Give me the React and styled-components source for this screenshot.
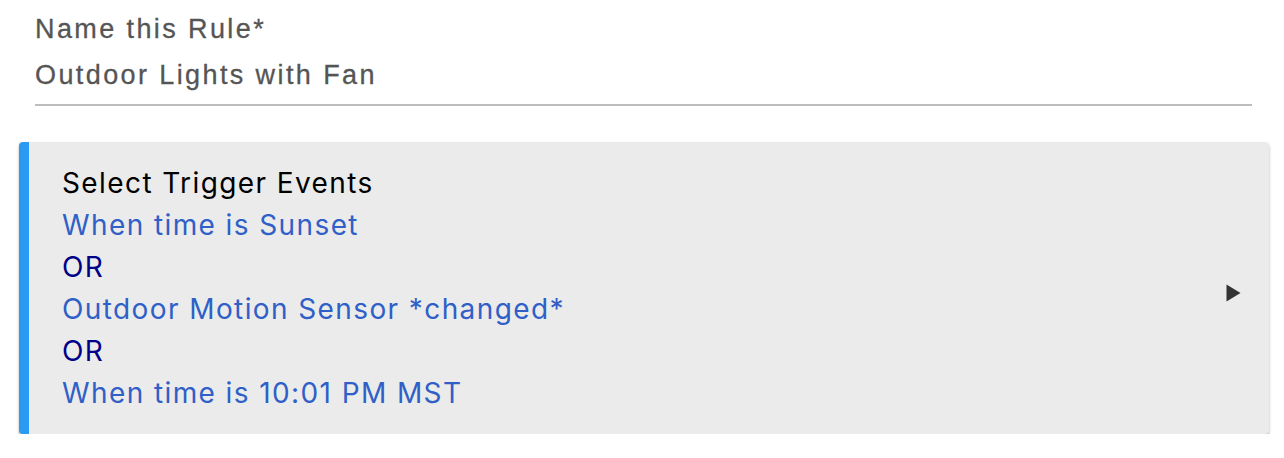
import styled, { createGlobalStyle } from 'styled-components'

const Global = createGlobalStyle`
  body {
    margin: 0;
    background: #ffffff;
    font-family: "Liberation Sans", Arial, sans-serif;
  }
`;

const Page = styled.div`
  padding: 6px 15px 0 19px;
`;

const NameField = styled.div`
  margin: 0 17px 0 16px;
  padding-bottom: 6px;
  border-bottom: 2px solid #bdbdbd;
  color: #555555;
  font-size: 27px;
  letter-spacing: 2.4px;
  line-height: 46px;
  -webkit-text-stroke: 0.3px #555555;
`;

const Card = styled.div`
  margin-top: 36px;
  display: flex;
  align-items: center;
  background: #ebebeb;
  border-left: 10px solid #2b9af3;
  border-radius: 4px;
  box-shadow: 0 2px 3px rgba(0, 0, 0, 0.3);
  padding: 20px 28px 20px 33px;
`;

const Lines = styled.div`
  flex: 1;
  font-family: Inter, "Liberation Sans", sans-serif;
  font-size: 28px;
  letter-spacing: 1.4px;
  line-height: 42px;
`;

const Line = styled.div`
  color: ${({ kind }) =>
    kind === 'title' ? '#000000' : kind === 'or' ? '#000088' : '#2f5fc7'};
`;

const Arrow = styled.svg`
  width: 15px;
  height: 18px;
  margin-top: 9px;
  display: block;
`;

export default function App() {
  return (
    <Page>
      <Global />
      <NameField>
        <div>Name this Rule*</div>
        <div>Outdoor Lights with Fan</div>
      </NameField>
      <Card>
        <Lines>
          <Line kind="title">Select Trigger Events</Line>
          <Line>When time is Sunset</Line>
          <Line kind="or">OR</Line>
          <Line>Outdoor Motion Sensor *changed*</Line>
          <Line kind="or">OR</Line>
          <Line>When time is 10:01 PM MST</Line>
        </Lines>
        <Arrow viewBox="0 0 15 18">
          <path d="M0.5 0.5 L14.5 9 L0.5 17.5 Z" fill="#333333" />
        </Arrow>
      </Card>
    </Page>
  )
}
